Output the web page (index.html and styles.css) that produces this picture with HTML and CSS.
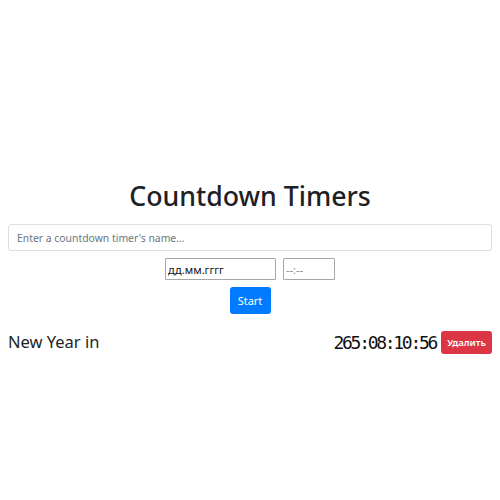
FILE: index.html
```html
<!DOCTYPE html>
<html lang="ru">
<head>
<meta charset="utf-8">
<title>Countdown Timers</title>
<link rel="stylesheet" href="styles.css">
</head>
<body>
<div class="app">
  <h1 class="title">Countdown Timers</h1>
  <input class="name-input" type="text" placeholder="Enter a countdown timer's name...">
  <div class="when-row">
    <input class="date-input" type="text" placeholder="дд.мм.гггг">
    <input class="time-input" type="text" placeholder="--:--">
  </div>
  <div class="start-row">
    <button class="btn-start" type="button">Start</button>
  </div>
  <div class="timer">
    <span class="timer-name">New Year in</span>
    <div class="timer-right">
      <span class="timer-clock">265:08:10:56</span>
      <button class="btn-delete" type="button">Удалить</button>
    </div>
  </div>
</div>
</body>
</html>
```

FILE: styles.css
```css
html, body {
  margin: 0;
  background: #fff;
}
body {
  font-family: "Noto Sans", "Open Sans", sans-serif;
  color: #212529;
}
.app {
  padding: 176px 8px 0 8px;
  display: flex;
  flex-direction: column;
}
.title {
  margin: 0;
  font-size: 26.7px;
  font-weight: 500;
  line-height: 40px;
  text-align: center;
  color: #1d2125;
}
.name-input {
  margin-top: 8px;
  box-sizing: border-box;
  height: 27px;
  width: 100%;
  border: 1px solid #dcdfe3;
  border-radius: 3px;
  padding: 0 8px;
  font-family: inherit;
  font-size: 10.4px;
  color: #495057;
  outline: none;
}
.name-input::placeholder {
  color: #6c757d;
}
.when-row {
  margin-top: 7px;
  display: flex;
  justify-content: center;
  gap: 7px;
}
.date-input, .time-input {
  box-sizing: border-box;
  height: 22px;
  border: 1px solid #a6a6a6;
  border-radius: 1px;
  padding: 0 2px;
  font-family: inherit;
  font-size: 11px;
  outline: none;
}
.date-input {
  width: 111px;
}
.date-input::placeholder {
  color: #111;
}
.time-input {
  width: 52px;
}
.time-input::placeholder {
  color: #8a8a8a;
}
.start-row {
  margin-top: 7px;
  display: flex;
  justify-content: center;
}
.btn-start {
  box-sizing: border-box;
  width: 41px;
  height: 27px;
  border: none;
  border-radius: 3px;
  background: #007bff;
  color: #fff;
  font-family: inherit;
  font-size: 11px;
  padding: 0;
}
.timer {
  margin-top: 16px;
  display: flex;
  justify-content: space-between;
  align-items: center;
}
.timer-name {
  font-size: 16.5px;
  line-height: 24px;
}
.timer-right {
  display: flex;
  align-items: center;
  gap: 5px;
}
.timer-clock {
  font-family: "DejaVu Sans Mono", monospace;
  font-size: 18px;
  letter-spacing: -2.3px;
  color: #111;
}
.btn-delete {
  box-sizing: border-box;
  width: 51px;
  height: 23px;
  border: none;
  border-radius: 3px;
  background: #dc3545;
  color: #fff;
  font-family: inherit;
  font-size: 9.5px;
  font-weight: 600;
  padding: 0;
}
```
